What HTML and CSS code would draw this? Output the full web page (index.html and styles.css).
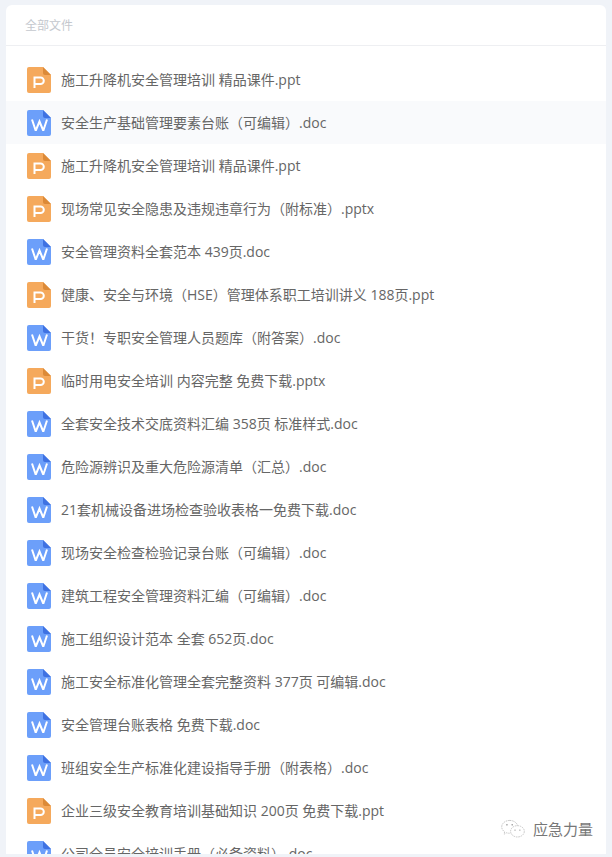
FILE: index.html
```html
<!DOCTYPE html>
<html lang="zh">
<head>
<meta charset="utf-8">
<title>全部文件</title>
<link rel="stylesheet" href="styles.css">
</head>
<body>
<svg class="defs" width="0" height="0" aria-hidden="true">
  <symbol id="ppt" viewBox="0 0 24 26">
    <path fill="#f5a95c" d="M2 0H16L24 8V24a2 2 0 0 1-2 2H2a2 2 0 0 1-2-2V2a2 2 0 0 1 2-2Z"/>
    <path fill="#dc8a38" d="M16 0L24 8H18a2 2 0 0 1-2-2Z"/>
    <path fill="none" stroke="#fff" stroke-width="2" d="M7.500 21V10.500H13.500a3.300 3.300 0 0 1 0 6.600H7.500"/>
  </symbol>
  <symbol id="doc" viewBox="0 0 24 26">
    <path fill="#6c9ffa" d="M2 0H16L24 8V24a2 2 0 0 1-2 2H2a2 2 0 0 1-2-2V2a2 2 0 0 1 2-2Z"/>
    <path fill="#3f72e2" d="M16 0L24 8H18a2 2 0 0 1-2-2Z"/>
    <path fill="none" stroke="#fff" stroke-width="2" d="M5 9.500L8.500 20H9L12.500 11.500L16 20H16.500L20 9.500"/>
  </symbol>
</svg>
<main class="panel">
  <header class="panel-head">全部文件</header>
  <ul class="files">
    <li class="file"><svg class="icon"><use href="#ppt"/></svg><span>施工升降机安全管理培训 精品课件.ppt</span></li>
    <li class="file active"><svg class="icon"><use href="#doc"/></svg><span>安全生产基础管理要素台账（可编辑）.doc</span></li>
    <li class="file"><svg class="icon"><use href="#ppt"/></svg><span>施工升降机安全管理培训 精品课件.ppt</span></li>
    <li class="file"><svg class="icon"><use href="#ppt"/></svg><span>现场常见安全隐患及违规违章行为（附标准）.pptx</span></li>
    <li class="file"><svg class="icon"><use href="#doc"/></svg><span>安全管理资料全套范本 439页.doc</span></li>
    <li class="file"><svg class="icon"><use href="#ppt"/></svg><span>健康、安全与环境（HSE）管理体系职工培训讲义 188页.ppt</span></li>
    <li class="file"><svg class="icon"><use href="#doc"/></svg><span>干货！专职安全管理人员题库（附答案）.doc</span></li>
    <li class="file"><svg class="icon"><use href="#ppt"/></svg><span>临时用电安全培训 内容完整 免费下载.pptx</span></li>
    <li class="file"><svg class="icon"><use href="#doc"/></svg><span>全套安全技术交底资料汇编 358页 标准样式.doc</span></li>
    <li class="file"><svg class="icon"><use href="#doc"/></svg><span>危险源辨识及重大危险源清单（汇总）.doc</span></li>
    <li class="file"><svg class="icon"><use href="#doc"/></svg><span>21套机械设备进场检查验收表格一免费下载.doc</span></li>
    <li class="file"><svg class="icon"><use href="#doc"/></svg><span>现场安全检查检验记录台账（可编辑）.doc</span></li>
    <li class="file"><svg class="icon"><use href="#doc"/></svg><span>建筑工程安全管理资料汇编（可编辑）.doc</span></li>
    <li class="file"><svg class="icon"><use href="#doc"/></svg><span>施工组织设计范本 全套 652页.doc</span></li>
    <li class="file"><svg class="icon"><use href="#doc"/></svg><span>施工安全标准化管理全套完整资料 377页 可编辑.doc</span></li>
    <li class="file"><svg class="icon"><use href="#doc"/></svg><span>安全管理台账表格 免费下载.doc</span></li>
    <li class="file"><svg class="icon"><use href="#doc"/></svg><span>班组安全生产标准化建设指导手册（附表格）.doc</span></li>
    <li class="file"><svg class="icon"><use href="#ppt"/></svg><span>企业三级安全教育培训基础知识 200页 免费下载.ppt</span></li>
    <li class="file"><svg class="icon"><use href="#doc"/></svg><span>公司全员安全培训手册（必备资料）.doc</span></li>
  </ul>
  <div class="watermark">
    <svg class="wechat" viewBox="0 0 32 26" aria-hidden="true">
      <path d="M12 3C6.500 3 2 6.600 2 11c0 2.500 1.400 4.600 3.600 6.100L5 20l3-1.700c1.200.4 2.500.6 3.800.6" />
      <path d="M12 3c4.800 0 8.900 2.800 9.800 6.600" />
      <ellipse cx="21.500" cy="16.500" rx="8.500" ry="7" />
      <circle class="dot" cx="8.500" cy="8.500" r="1"/><circle class="dot" cx="15" cy="8.500" r="1"/>
      <circle class="dot" cx="18.500" cy="15" r=".9"/><circle class="dot" cx="24.500" cy="15" r=".9"/>
    </svg>
    <span>应急力量</span>
  </div>
</main>
</body>
</html>
```
FILE: styles.css
```css
* { box-sizing: border-box; }
html, body { margin: 0; height: 100%; overflow: hidden; }
body {
  background: #f0f3f8;
  padding: 5px 6px 3px;
  font-family: "Open Sans", "Noto Sans CJK SC", "Liberation Sans", sans-serif;
}
.defs { position: absolute; }
.panel {
  position: relative;
  height: 849px;
  background: #fff;
  border-radius: 6px 6px 0 0;
  overflow: hidden;
}
.panel-head {
  height: 41px;
  padding: 0 19px;
  border-bottom: 1px solid #eeeff2;
  font-size: 12px;
  line-height: 42px;
  color: #c4c8ce;
}
.files { list-style: none; margin: 0; padding: 12px 0 0; }
.file {
  display: flex;
  align-items: center;
  gap: 10px;
  height: 43px;
  padding-left: 21px;
  font-size: 14px;
  line-height: 20px;
  color: #666;
}
.file.active { background: #f9fafc; }
.icon { width: 24px; height: 26px; flex: none; }
.watermark {
  position: absolute;
  right: 13px;
  bottom: 15px;
  display: flex;
  align-items: center;
  gap: 7px;
  font-size: 15px;
  color: #777;
  background: rgba(255,255,255,.85);
}
.wechat { width: 26px; height: 21px; fill: none; stroke: #bbb; stroke-width: 1; stroke-dasharray: 2 1; }
.wechat .dot { fill: #999; stroke: none; }
```
